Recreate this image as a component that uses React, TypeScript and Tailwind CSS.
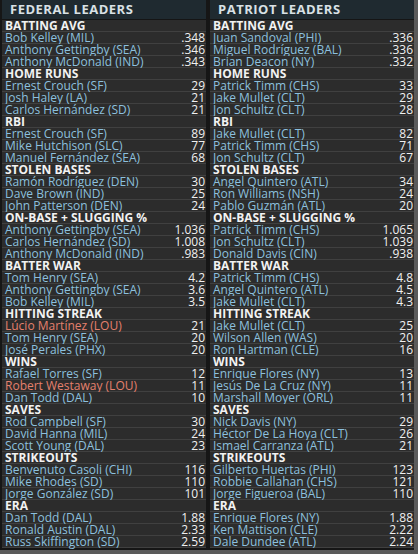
type Row = { name: string; value: string; hot?: boolean };
type Group = { title: string; rows: Row[] };

const federal: Group[] = [
  { title: 'BATTING AVG', rows: [
    { name: 'Bob Kelley (MIL)', value: '.348' },
    { name: 'Anthony Gettingby (SEA)', value: '.346' },
    { name: 'Anthony McDonald (IND)', value: '.343' },
  ] },
  { title: 'HOME RUNS', rows: [
    { name: 'Ernest Crouch (SF)', value: '29' },
    { name: 'Josh Haley (LA)', value: '21' },
    { name: 'Carlos Hernández (SD)', value: '21' },
  ] },
  { title: 'RBI', rows: [
    { name: 'Ernest Crouch (SF)', value: '89' },
    { name: 'Mike Hutchison (SLC)', value: '77' },
    { name: 'Manuel Fernández (SEA)', value: '68' },
  ] },
  { title: 'STOLEN BASES', rows: [
    { name: 'Ramón Rodríguez (DEN)', value: '30' },
    { name: 'Dave Brown (IND)', value: '25' },
    { name: 'John Patterson (DEN)', value: '24' },
  ] },
  { title: 'ON-BASE + SLUGGING %', rows: [
    { name: 'Anthony Gettingby (SEA)', value: '1.036' },
    { name: 'Carlos Hernández (SD)', value: '1.008' },
    { name: 'Anthony McDonald (IND)', value: '.983' },
  ] },
  { title: 'BATTER WAR', rows: [
    { name: 'Tom Henry (SEA)', value: '4.2' },
    { name: 'Anthony Gettingby (SEA)', value: '3.6' },
    { name: 'Bob Kelley (MIL)', value: '3.5' },
  ] },
  { title: 'HITTING STREAK', rows: [
    { name: 'Lúcio Martínez (LOU)', value: '21', hot: true },
    { name: 'Tom Henry (SEA)', value: '20' },
    { name: 'José Perales (PHX)', value: '20' },
  ] },
  { title: 'WINS', rows: [
    { name: 'Rafael Torres (SF)', value: '12' },
    { name: 'Robert Westaway (LOU)', value: '11', hot: true },
    { name: 'Dan Todd (DAL)', value: '10' },
  ] },
  { title: 'SAVES', rows: [
    { name: 'Rod Campbell (SF)', value: '30' },
    { name: 'David Hanna (MIL)', value: '24' },
    { name: 'Scott Young (DAL)', value: '23' },
  ] },
  { title: 'STRIKEOUTS', rows: [
    { name: 'Benvenuto Casoli (CHI)', value: '116' },
    { name: 'Mike Rhodes (SD)', value: '110' },
    { name: 'Jorge González (SD)', value: '101' },
  ] },
  { title: 'ERA', rows: [
    { name: 'Dan Todd (DAL)', value: '1.88' },
    { name: 'Ronald Austin (DAL)', value: '2.33' },
    { name: 'Russ Skiffington (SD)', value: '2.59' },
  ] },
];

const patriot: Group[] = [
  { title: 'BATTING AVG', rows: [
    { name: 'Juan Sandoval (PHI)', value: '.336' },
    { name: 'Miguel Rodríguez (BAL)', value: '.336' },
    { name: 'Brian Deacon (NY)', value: '.332' },
  ] },
  { title: 'HOME RUNS', rows: [
    { name: 'Patrick Timm (CHS)', value: '33' },
    { name: 'Jake Mullet (CLT)', value: '29' },
    { name: 'Jon Schultz (CLT)', value: '28' },
  ] },
  { title: 'RBI', rows: [
    { name: 'Jake Mullet (CLT)', value: '82' },
    { name: 'Patrick Timm (CHS)', value: '71' },
    { name: 'Jon Schultz (CLT)', value: '67' },
  ] },
  { title: 'STOLEN BASES', rows: [
    { name: 'Angel Quintero (ATL)', value: '34' },
    { name: 'Ron Williams (NSH)', value: '24' },
    { name: 'Pablo Guzmán (ATL)', value: '20' },
  ] },
  { title: 'ON-BASE + SLUGGING %', rows: [
    { name: 'Patrick Timm (CHS)', value: '1.065' },
    { name: 'Jon Schultz (CLT)', value: '1.039' },
    { name: 'Donald Davis (CIN)', value: '.938' },
  ] },
  { title: 'BATTER WAR', rows: [
    { name: 'Patrick Timm (CHS)', value: '4.8' },
    { name: 'Angel Quintero (ATL)', value: '4.5' },
    { name: 'Jake Mullet (CLT)', value: '4.3' },
  ] },
  { title: 'HITTING STREAK', rows: [
    { name: 'Jake Mullet (CLT)', value: '25' },
    { name: 'Wilson Allen (WAS)', value: '20' },
    { name: 'Ron Hartman (CLE)', value: '16' },
  ] },
  { title: 'WINS', rows: [
    { name: 'Enrique Flores (NY)', value: '13' },
    { name: 'Jesús De La Cruz (NY)', value: '11' },
    { name: 'Marshall Moyer (ORL)', value: '11' },
  ] },
  { title: 'SAVES', rows: [
    { name: 'Nick Davis (NY)', value: '29' },
    { name: 'Héctor De La Hoya (CLT)', value: '26' },
    { name: 'Ismael Carranza (ATL)', value: '21' },
  ] },
  { title: 'STRIKEOUTS', rows: [
    { name: 'Gilberto Huertas (PHI)', value: '123' },
    { name: 'Robbie Callahan (CHS)', value: '121' },
    { name: 'Jorge Figueroa (BAL)', value: '110' },
  ] },
  { title: 'ERA', rows: [
    { name: 'Enrique Flores (NY)', value: '1.88' },
    { name: 'Ken Mattison (CLE)', value: '2.22' },
    { name: 'Dale Dundee (ATL)', value: '2.24' },
  ] },
];

const LeaderPanel = ({ heading, groups }: { heading: string; groups: Group[] }) => (
  <div className="w-[204px] flex flex-col">
    <div className="h-[20px] bg-[#1f2a30] border-b border-[#151515] pl-[8px] flex items-center text-[13px] font-bold tracking-[0.5px] text-[#d9e1e5]">
      {heading}
    </div>
    {groups.map((g) => (
      <div key={g.title} className="flex flex-col">
        <div className="h-[12px] bg-[#2c2c2c] border-b border-[#404040] pl-[3px] flex items-center text-[12px] font-bold text-[#f2f2f2] leading-[11px]">
          {g.title}
        </div>
        {g.rows.map((r) => (
          <div
            key={r.name}
            className="h-[12px] bg-[#2c2c2c] border-b border-[#404040] pl-[3px] pr-[1px] flex items-center justify-between text-[12px] leading-[11px]"
          >
            <span className={r.hot ? 'text-[#e5806d]' : 'text-[#8cc0de]'}>{r.name}</span>
            <span className="text-[#f0f0f0]">{r.value}</span>
          </div>
        ))}
      </div>
    ))}
  </div>
);

export default function App() {
  return (
    <div
      className="w-[418px] h-[554px] bg-[#161616] flex gap-[4px] pl-[2px] border-r-4 border-b-4 border-[#5a5a5a] overflow-hidden"
      style={{ fontFamily: '"Open Sans", "Noto Sans", sans-serif' }}
    >
      <LeaderPanel heading="FEDERAL LEADERS" groups={federal} />
      <LeaderPanel heading="PATRIOT LEADERS" groups={patriot} />
    </div>
  );
}
